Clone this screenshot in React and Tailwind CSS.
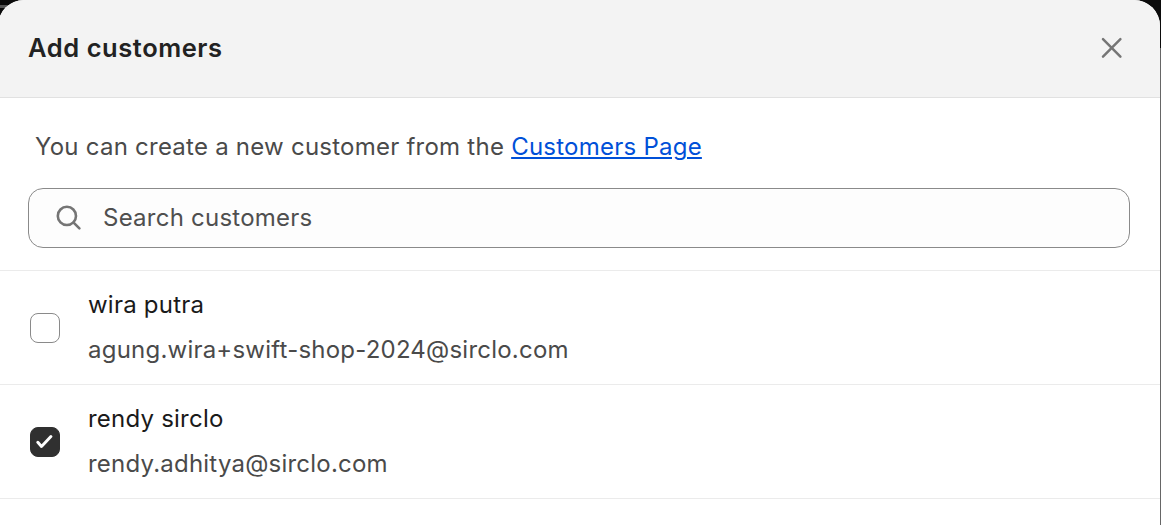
import { useState } from "react";
import clsx from "clsx";

const CUSTOMERS = [
    { id: 1, name: "wira putra", email: "agung.wira+swift-shop-2024@sirclo.com" },
    { id: 2, name: "rendy sirclo", email: "rendy.adhitya@sirclo.com" },
];

function CloseIcon() {
    return (
        <svg width="22" height="22" viewBox="0 0 22 22" fill="none" stroke="#757575" strokeWidth="2.5" strokeLinecap="round">
            <path d="M2 2.2l17.4 17.4M19.4 2.2L2 19.6" />
        </svg>
    );
}

function SearchIcon() {
    return (
        <svg width="26" height="26" viewBox="0 0 26 26" fill="none" stroke="#757575" strokeWidth="2.6" strokeLinecap="round">
            <circle cx="10.9" cy="10.9" r="9.1" />
            <path d="M17.6 17.6l5.8 5.8" />
        </svg>
    );
}

function Checkbox({ checked, label, onChange }) {
    return (
        <button
            type="button"
            role="checkbox"
            aria-checked={checked}
            aria-label={label}
            onClick={onChange}
            className={clsx(
                "flex size-[30px] shrink-0 items-center justify-center rounded-[8px] border",
                checked ? "border-[#303030] bg-[#303030]" : "border-[#8a8a8a] bg-white"
            )}
        >
            {checked && (
                <svg width="18" height="16" viewBox="0 0 18 16" fill="none" stroke="#fff" strokeWidth="2.9" strokeLinecap="round" strokeLinejoin="round">
                    <path d="M1.8 8.3l3.7 4.2L14.9 2.5" />
                </svg>
            )}
        </button>
    );
}

export default function App() {
    const [selected, setSelected] = useState([2]);
    const toggle = (id) => setSelected((s) => (s.includes(id) ? s.filter((x) => x !== id) : [...s, id]));

    return (
        <div className="relative h-[525px] w-[1161px] overflow-hidden bg-[#666666] font-['Inter',sans-serif] text-2xl leading-[30px] text-[#4a4a4a]">
            <div className="absolute inset-x-0 top-0 h-12 bg-[#0b0b0b]">
                <div className="mt-[5px] h-[3px] w-5 bg-[#555555]" />
            </div>
            <div className="relative -ml-0.5 flex h-full w-[1162px] flex-col overflow-hidden rounded-t-[26px] bg-white pl-0.5">
                <header className="-ml-0.5 flex h-[98px] shrink-0 items-center justify-between border-b border-[#e1e1e1] bg-[#f3f3f3] pr-[37px] pb-px pl-[30px]">
                    <h1 className="text-[25.5px] font-semibold tracking-[0.56px] text-[#222222]">Add customers</h1>
                    <button type="button" aria-label="Close"><CloseIcon /></button>
                </header>

                <section className="flex h-[173px] shrink-0 flex-col border-b border-[#ebebeb] pt-[34px] pr-[30px] pl-7">
                    <p className="pl-[7px] tracking-[0.24px]">
                        You can create a new customer from the{" "}
                        <a href="#" className="text-[#0050d8] underline decoration-2 underline-offset-2">Customers Page</a>
                    </p>
                    <div className="mt-[26px] flex h-[60px] items-center rounded-[15px] border border-[#8a8a8a] bg-[#fdfdfd] pl-[27px]">
                        <SearchIcon />
                        <input
                            placeholder="Search customers"
                            className="ml-[21px] flex-1 tracking-[0.24px] outline-none placeholder:text-[#4f4f4f]"
                        />
                    </div>
                </section>

                {CUSTOMERS.map((c) => (
                    <div key={c.id} className="flex h-[114px] shrink-0 items-center gap-7 border-b border-[#ebebeb] pl-[30px]">
                        <Checkbox checked={selected.includes(c.id)} label={c.name} onChange={() => toggle(c.id)} />
                        <div className="flex flex-col gap-[15px] tracking-[0.22px]">
                            <span className="text-[#1a1a1a]">{c.name}</span>
                            <span>{c.email}</span>
                        </div>
                    </div>
                ))}
            </div>
        </div>
    );
}
